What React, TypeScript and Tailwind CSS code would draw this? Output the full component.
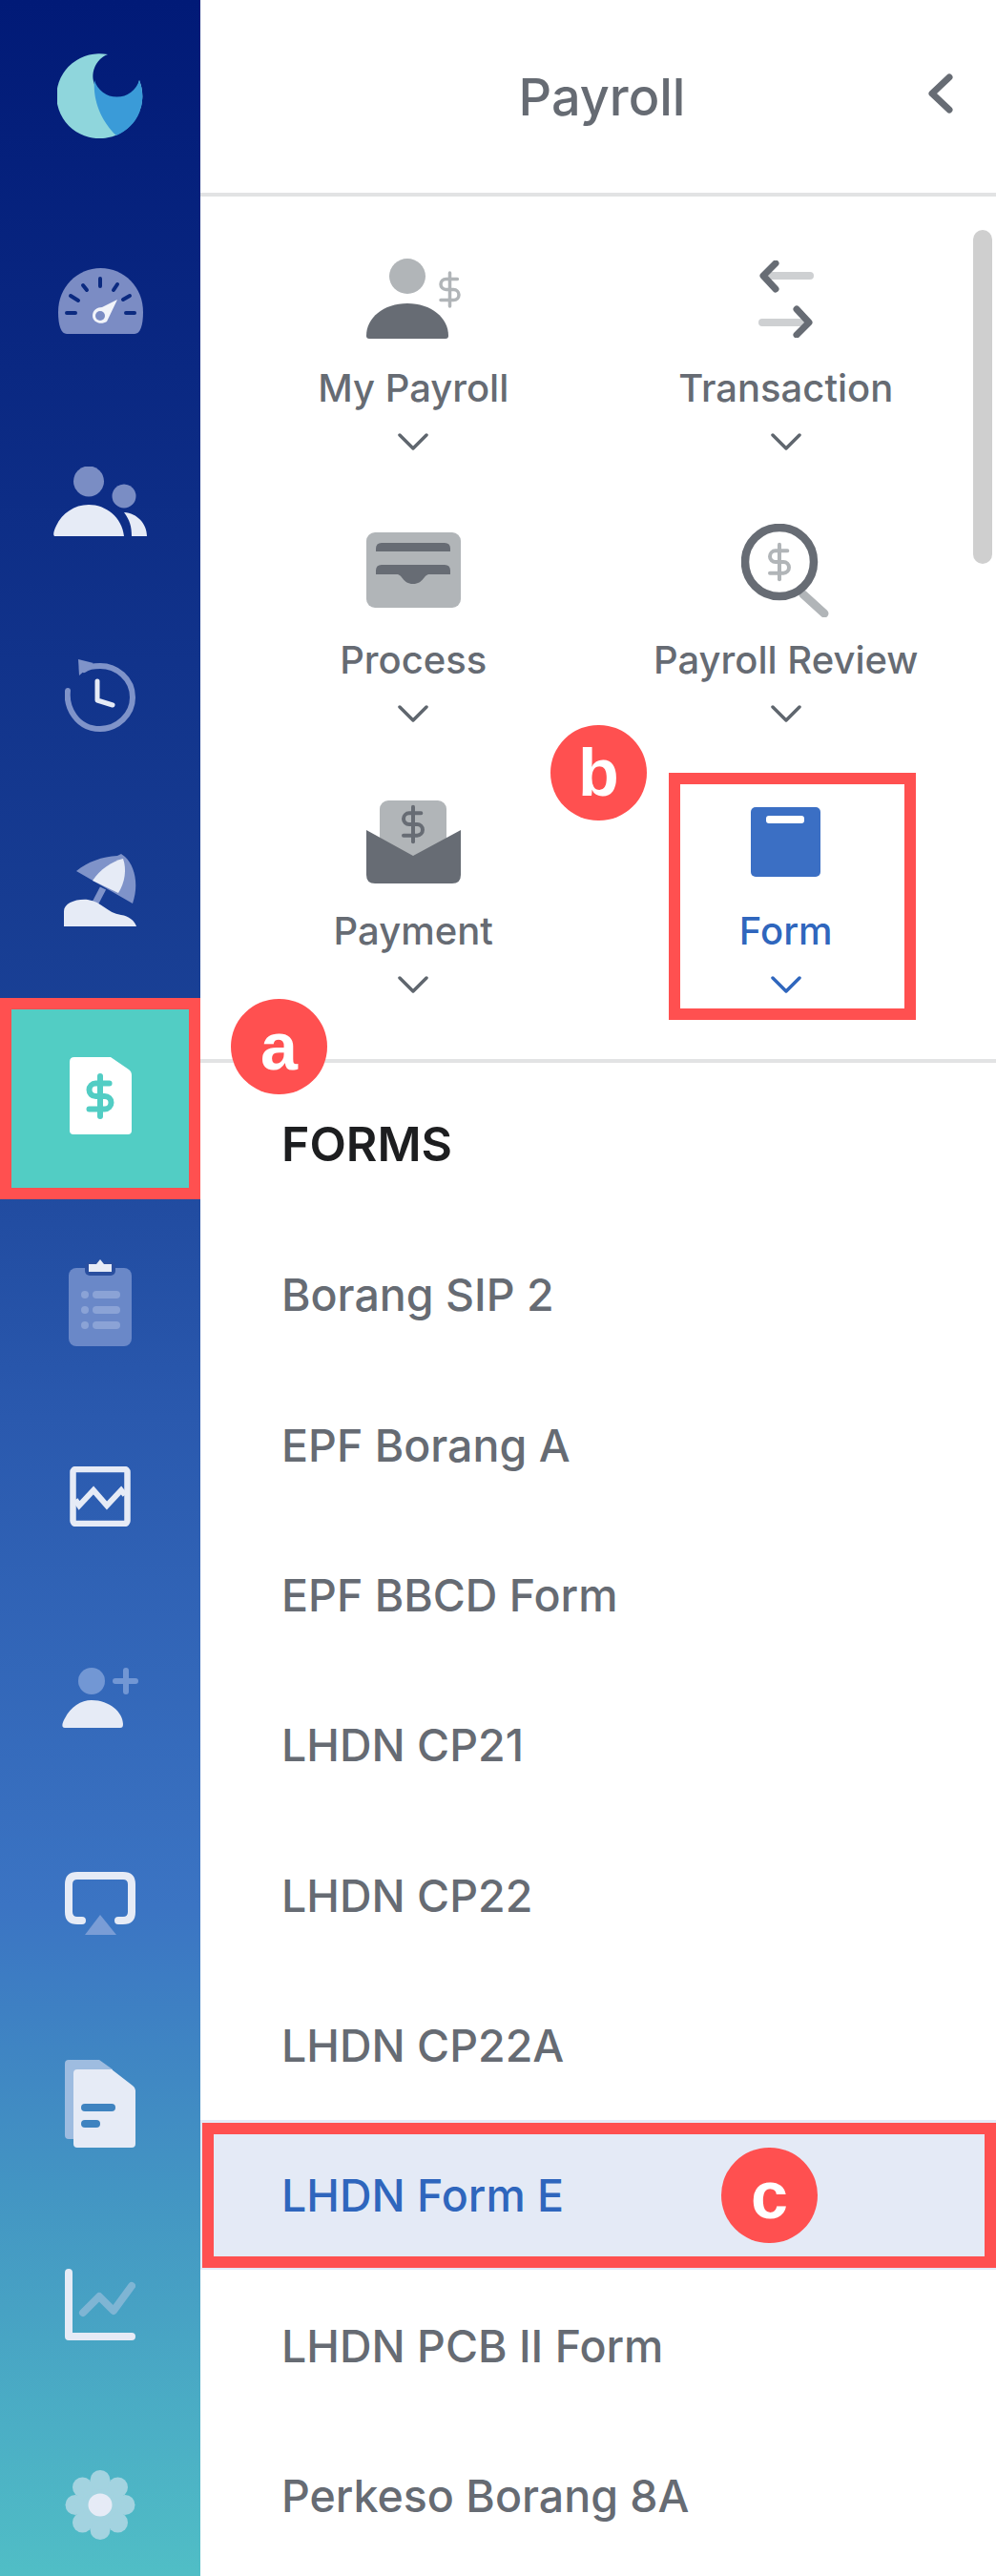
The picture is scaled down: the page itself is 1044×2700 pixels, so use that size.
import React from "react";

const LIGHT = "#E6EBF6";
const GREY = "#676C74";
const GREY_LIGHT = "#B1B5B8";

const Dollar = ({ x, y, h, color, width }: { x: number; y: number; h: number; color: string; width: number }) => {
  const s = h / 24;
  return (
    <g transform={`translate(${x - 12 * s} ${y - 12 * s}) scale(${s})`} fill="none" stroke={color} strokeWidth={width / s} strokeLinecap="round">
      <path d="M12 1v22" />
      <path d="M17 5H9.5a3.5 3.5 0 0 0 0 7h5a3.5 3.5 0 0 1 0 7H6" />
    </g>
  );
};

const Logo = () => (
  <svg width="90" height="89" viewBox="0 0 90 89">
    <path d="M53 1A45 44.5 0 1 0 86 28A24.5 24.5 0 1 1 53 1Z" fill="#8FD6DC" />
    <path d="M39 28C37 50 47 72 62 86A45 44.5 0 0 0 86 28A24.5 24.5 0 0 1 39 28Z" fill="#3A9BD8" />
  </svg>
);

const Gauge = () => (
  <svg width="89" height="69" viewBox="0 0 89 69">
    <path d="M9 69C3 69 0 60 0 46C0 20 20 0 44.5 0C69 0 89 20 89 46C89 60 86 69 80 69Z" fill="#7B8CC4" />
    <g stroke="#0B2A80" strokeWidth="4" strokeLinecap="round">
      <path d="M9 47H18M13 29L21 34M26 18L30 23M44 11V19M62 17L58 23M75 29L68 33M71 47H80" />
    </g>
    <path d="M62 33L51 56C45 60 36 57 36 50C36 44 41 41 46 41Z" fill="#F2F4FA" />
    <circle cx="44" cy="50" r="5" fill="#7B8CC4" />
  </svg>
);

const People = () => (
  <svg width="98" height="73" viewBox="0 0 98 73">
    <ellipse cx="37" cy="15.5" rx="16" ry="16" fill="#7A8DC4" />
    <ellipse cx="74" cy="31" rx="12.5" ry="12.5" fill="#7A8DC4" />
    <path d="M2 73C-1 73 0 68 3 62C9 49 22 40 37 40C55 40 72 53 74 73Z" fill={LIGHT} />
    <path d="M74 48C88 49 98 60 98 73H82C82 63 80 56 74 48Z" fill={LIGHT} />
  </svg>
);

const History = () => (
  <svg width="74" height="77" viewBox="0 0 74 77">
    <path d="M3 33C1 50 12 73 37 73C55 73 71 58 71 40C71 20 54 7 37 7C30 7 24 8 20 11" fill="none" stroke="#7F93C9" strokeWidth="6" strokeLinecap="round" />
    <path d="M14 0L30 4L15 17Z" fill="#7F93C9" />
    <path d="M34 23V43L50 48" fill="none" stroke={LIGHT} strokeWidth="5" strokeLinejoin="round" strokeLinecap="round" />
  </svg>
);

const Umbrella = () => (
  <svg width="77" height="76" viewBox="0 0 77 76">
    <path d="M41 36L30 57" stroke="#7F93C9" strokeWidth="7" />
    <path d="M13 18C25 8 40 3 56 2L60 0L64 3C74 12 79 32 72 52Z" fill="#7F93C9" />
    <path d="M30 28C38 16 50 8 62 5C66 16 64 30 57 41Z" fill={LIGHT} />
    <path d="M0 76V60C0 52 12 47 25 48C40 50 45 62 60 64C68 65 74 70 76 76Z" fill={LIGHT} />
  </svg>
);

const FileDollar = () => (
  <svg width="65" height="81" viewBox="0 0 65 81">
    <path d="M5 0H43L62 13Q65 15 65 19V77Q65 81 61 81H4Q0 81 0 77V5Q0 0 5 0Z" fill="white" />
    <Dollar x={32} y={41} h={46} color="#52CDC4" width={6} />
  </svg>
);

const Clipboard = () => (
  <svg width="66" height="91" viewBox="0 0 66 91">
    <rect x="0" y="9" width="66" height="82" rx="8" fill="#6A88C8" />
    <rect x="17" y="3" width="32" height="14" rx="5" fill="#2A4F9F" />
    <path d="M21 5H29L33 0L37 5H45V13H21Z" fill={LIGHT} />
    <g fill="#8BA3D6">
      <ellipse cx="17" cy="37" rx="4" ry="4" />
      <ellipse cx="17" cy="53" rx="4" ry="4" />
      <ellipse cx="17" cy="69" rx="4" ry="4" />
      <rect x="25" y="33" width="29" height="8" rx="4" />
      <rect x="25" y="49" width="29" height="8" rx="4" />
      <rect x="25" y="65" width="29" height="8" rx="4" />
    </g>
  </svg>
);

const ImageChart = () => (
  <svg width="64" height="63" viewBox="0 0 64 63" fill="none" stroke={LIGHT}>
    <rect x="3.5" y="3" width="57" height="57" rx="3" strokeWidth="6.5" />
    <path d="M6 35L10 41L25 25L39 41L54 25L58 30" strokeWidth="6" />
  </svg>
);

const AddUser = () => (
  <svg width="80" height="64" viewBox="0 0 80 64">
    <ellipse cx="31" cy="15" rx="14" ry="14" fill="#7297D4" />
    <path d="M3 64C-1 64 0 59 3 54C9 42 20 35 31 35C50 35 64 48 64 60C64 63 63 64 61 64Z" fill={LIGHT} />
    <path d="M56 15H77M67 4V26" stroke="#7297D4" strokeWidth="6" strokeLinecap="round" />
  </svg>
);

const Airplay = () => (
  <svg width="74" height="66" viewBox="0 0 74 66">
    <path d="M18 51H13Q4 51 4 42V13Q4 4 13 4H61Q70 4 70 13V42Q70 51 61 51H56" fill="none" stroke={LIGHT} strokeWidth="8" strokeLinecap="round" />
    <path d="M37 45L54 66H21Z" fill="#7A9DD6" />
  </svg>
);

const Doc = () => (
  <svg width="74" height="92" viewBox="0 0 74 92">
    <path d="M4 0H36L50 10V83H4Q0 83 0 79V4Q0 0 4 0Z" fill="#9EBCE0" />
    <path d="M13 10H49L71 27Q74 29 74 32V88Q74 92 70 92H13Q9 92 9 88V14Q9 10 13 10Z" fill={LIGHT} />
    <rect x="17" y="46" width="36" height="8" rx="4" fill="#3F83C0" />
    <rect x="17" y="63" width="20" height="8" rx="4" fill="#3F83C0" />
  </svg>
);

const LineChart = () => (
  <svg width="74" height="75" viewBox="0 0 74 75" fill="none" strokeWidth="8" strokeLinecap="round" strokeLinejoin="round">
    <path d="M19 46L36 29L51 44L70 18" stroke="#7FB5D4" />
    <path d="M4 4V71H70" stroke={LIGHT} />
  </svg>
);

const Gear = () => (
  <svg width="74" height="73" viewBox="0 0 74 73">
    <g fill="#A3D3E0">
      <circle cx="37" cy="36.5" r="26" />
      <circle cx="37" cy="10.5" r="10.5" />
      <circle cx="37" cy="62.5" r="10.5" />
      <circle cx="11" cy="36.5" r="10.5" />
      <circle cx="63" cy="36.5" r="10.5" />
      <circle cx="18.5" cy="18" r="10.5" />
      <circle cx="55.5" cy="18" r="10.5" />
      <circle cx="18.5" cy="55" r="10.5" />
      <circle cx="55.5" cy="55" r="10.5" />
    </g>
    <ellipse cx="37" cy="36.5" rx="12.5" ry="12" fill={LIGHT} />
  </svg>
);

const MyPayroll = () => (
  <svg width="99" height="84" viewBox="0 0 99 84">
    <ellipse cx="43" cy="18.5" rx="19" ry="18.5" fill={GREY_LIGHT} />
    <path d="M3 84Q0 84 0 81C0 62 18 47 43 47C68 47 86 62 86 81Q86 84 83 84Z" fill={GREY} />
    <Dollar x={87.5} y={32.5} h={38} color={GREY_LIGHT} width={3.5} />
  </svg>
);

const Transaction = () => (
  <svg width="58" height="81" viewBox="0 0 58 81" fill="none" strokeLinecap="round" strokeLinejoin="round">
    <path d="M11 16H54M4 65H47" stroke="#CED0D2" strokeWidth="8" />
    <path d="M18 3L5 16L18 30M40 51L53 65L40 78" stroke={GREY} strokeWidth="7" />
  </svg>
);

const Process = () => (
  <svg width="99" height="79" viewBox="0 0 99 79">
    <rect width="99" height="79" rx="9" fill={GREY_LIGHT} />
    <path d="M10 20V17Q10 11 16 11H82Q88 11 88 17V20Z" fill={GREY} />
    <path d="M10 44V40Q10 34 16 34H82Q88 34 88 40V44H66C60 44 60 54 49 54C38 54 38 44 32 44Z" fill={GREY} />
  </svg>
);

const Review = () => (
  <svg width="93" height="98" viewBox="0 0 93 98" fill="none">
    <path d="M65 74L87 94" stroke={GREY_LIGHT} strokeWidth="9" strokeLinecap="round" />
    <circle cx="40" cy="40" r="36" stroke={GREY} strokeWidth="8.5" />
    <Dollar x={40} y={40} h={40} color={GREY_LIGHT} width={4} />
  </svg>
);

const Payment = () => (
  <svg width="99" height="87" viewBox="0 0 99 87">
    <rect x="14" y="0" width="70" height="60" rx="9" fill={GREY_LIGHT} />
    <Dollar x={49} y={25} h={40} color={GREY} width={4} />
    <path d="M0 31L49 58L99 31V78Q99 87 90 87H9Q0 87 0 78Z" fill={GREY} />
  </svg>
);

const FormIcon = () => (
  <svg width="73" height="73" viewBox="0 0 73 73">
    <rect width="73" height="73" rx="5" fill="#3B6FC4" />
    <rect x="16" y="9" width="40" height="8" rx="3" fill="white" />
  </svg>
);

const Chevron = ({ color }: { color: string }) => (
  <svg width="32" height="18" viewBox="0 0 32 18" fill="none" stroke={color} strokeWidth="3.5" strokeLinecap="round" strokeLinejoin="round">
    <path d="M2 2L16 16L30 2" />
  </svg>
);

const Badge = ({ className, label }: { className: string; label: string }) => (
  <div className={`absolute w-[101px] h-[100px] rounded-full bg-[#FF5050] text-white font-bold text-[70px] leading-none font-['Liberation_Sans'] flex items-center justify-center ${className}`}>
    {label}
  </div>
);

// some icons sit a little above the middle of their row
const railIcons = [
  { Icon: Logo, cls: "h-[210px] pb-[9px]" },
  { Icon: Gauge, cls: "h-[210px]" },
  { Icon: People, cls: "h-[210px]" },
  { Icon: History, cls: "h-[210px] pb-[12px]" },
  { Icon: Umbrella, cls: "h-[210px] pb-[24px]" },
  { Icon: FileDollar, cls: "h-[207px] mb-[3px] pb-[11px] bg-[#52CDC4]" },
  { Icon: Clipboard, cls: "h-[210px]" },
  { Icon: ImageChart, cls: "h-[210px] pb-[14px]" },
  { Icon: AddUser, cls: "h-[210px] pb-[12px]" },
  { Icon: Airplay, cls: "h-[210px]" },
  { Icon: Doc, cls: "h-[210px]" },
  { Icon: LineChart, cls: "h-[210px]" },
  { Icon: Gear, cls: "h-[210px]" },
];

const tiles = [
  { label: "My Payroll", Icon: MyPayroll },
  { label: "Transaction", Icon: Transaction },
  { label: "Process", Icon: Process },
  { label: "Payroll Review", Icon: Review },
  { label: "Payment", Icon: Payment },
  { label: "Form", Icon: FormIcon, active: true },
];

const forms = ["Borang SIP 2", "EPF Borang A", "EPF BBCD Form", "LHDN CP21", "LHDN CP22", "LHDN CP22A", "LHDN Form E", "LHDN PCB II Form", "Perkeso Borang 8A"];

export default function App() {
  return (
    <div className="relative w-[1044px] h-[2700px] overflow-hidden flex bg-white font-['Inter',sans-serif]">
      <aside className="w-[210px] shrink-0 flex flex-col bg-[linear-gradient(180deg,#011A77_0%,#1A4196_40%,#2A59AE_55%,#3B74C3_74%,#4395C3_85%,#50BEC6_100%)]">
        {railIcons.map(({ Icon, cls }, i) => (
          <div key={i} className={`shrink-0 flex items-center justify-center ${cls}`}>
            <Icon />
          </div>
        ))}
      </aside>

      <main className="flex-1 flex flex-col">
        <header className="relative h-[206px] shrink-0 border-b-4 border-[#E2E3E4] flex items-center justify-center pl-[8px] pt-[1px]">
          <h1 className="text-[#666B73] text-[54px] font-medium">Payroll</h1>
          <svg className="absolute right-[45px] top-[77px]" width="26" height="42" viewBox="0 0 26 42" fill="none" stroke={GREY} strokeWidth="7" strokeLinecap="round" strokeLinejoin="round">
            <path d="M22 4L4 21L22 38" />
          </svg>
        </header>

        <section className="relative h-[908px] shrink-0 border-b-4 border-[#E2E3E4] pt-[35px] pl-[28px]">
          <div className="absolute right-[4px] top-[35px] w-[20px] h-[350px] rounded-full bg-[#CFCFCF]" />
          <div className="grid grid-cols-[390.5px_390.5px] auto-rows-[284.5px]">
            {tiles.map(({ label, Icon, active }) => (
              <div key={label} className="flex flex-col items-center">
                <div className="h-[144px] flex items-center justify-center">
                  <Icon />
                </div>
                <div className={`h-[44px] leading-[44px] text-[40px] font-medium ${active ? "text-[#2F66BD]" : "text-[#666B73]"}`}>{label}</div>
                <div className="mt-[25px] flex">
                  <Chevron color={active ? "#2F66BD" : "#5F666E"} />
                </div>
              </div>
            ))}
          </div>
        </section>

        <div className="h-[164px] shrink-0 flex items-center pl-[85px] pt-[6px] text-[#1D1E20] text-[50px] font-semibold">FORMS</div>
        {forms.map((name) => (
          <div key={name} className={`h-[157.33px] shrink-0 flex items-center pl-[85px] pt-[3px] text-[46.5px] font-medium ${name === "LHDN Form E" ? "bg-[#E4EAF6] text-[#2F66BD]" : "text-[#666B73]"}`}>
            {name}
          </div>
        ))}
      </main>

      {/* annotation callouts sit over the ui */}
      <div className="absolute left-0 top-[1046px] w-[210px] h-[211px] border-[12px] border-[#FF5050]" />
      <div className="absolute left-[701px] top-[810px] w-[259px] h-[259px] border-[12px] border-[#FF5050]" />
      <div className="absolute left-[212px] top-[2225px] w-[832px] h-[152px] border-[12px] border-[#FF5050]" />
      <Badge className="left-[242px] top-[1047px]" label="a" />
      <Badge className="left-[577px] top-[760px]" label="b" />
      <Badge className="left-[756px] top-[2251px]" label="c" />
    </div>
  );
}
